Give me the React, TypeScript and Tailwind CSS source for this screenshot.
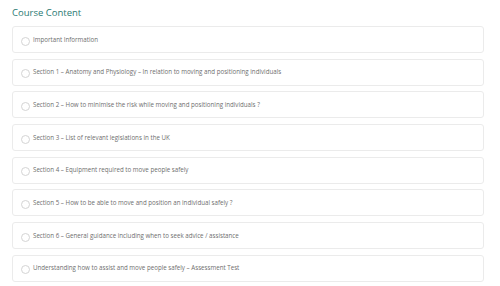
const sections = [
  "Important Information",
  "Section 1 – Anatomy and Physiology – In relation to moving and positioning individuals",
  "Section 2 – How to minimise the risk while moving and positioning individuals ?",
  "Section 3 – List of relevant legislations in the UK",
  "Section 4 – Equipment required to move people safely",
  "Section 5 – How to be able to move and position an individual safely ?",
  "Section 6 – General guidance including when to seek advice / assistance",
  "Understanding how to assist and move people safely – Assessment Test",
];

export default function App() {
  return (
    <div className="min-h-[286px] bg-white pl-[12px] pr-[16px] pt-[6px] font-['Open_Sans',sans-serif]">
      <h2 className="text-[9.5px] leading-[14px] font-medium text-[#2a7a73]">Course Content</h2>
      <div className="mt-[6px] flex flex-col gap-[5.7px]">
        {sections.map((title) => (
          <div
            key={title}
            className="flex h-[27px] items-center gap-[3px] rounded-[3px] border border-[#ebebeb] bg-white pl-[8px]"
          >
            <span className="mt-[3px] h-[9px] w-[9px] shrink-0 rounded-full border border-[#d4d4d4]" />
            <span className="text-[6.2px] leading-[8px] text-[#6e6e6e]">{title}</span>
          </div>
        ))}
      </div>
    </div>
  );
}
